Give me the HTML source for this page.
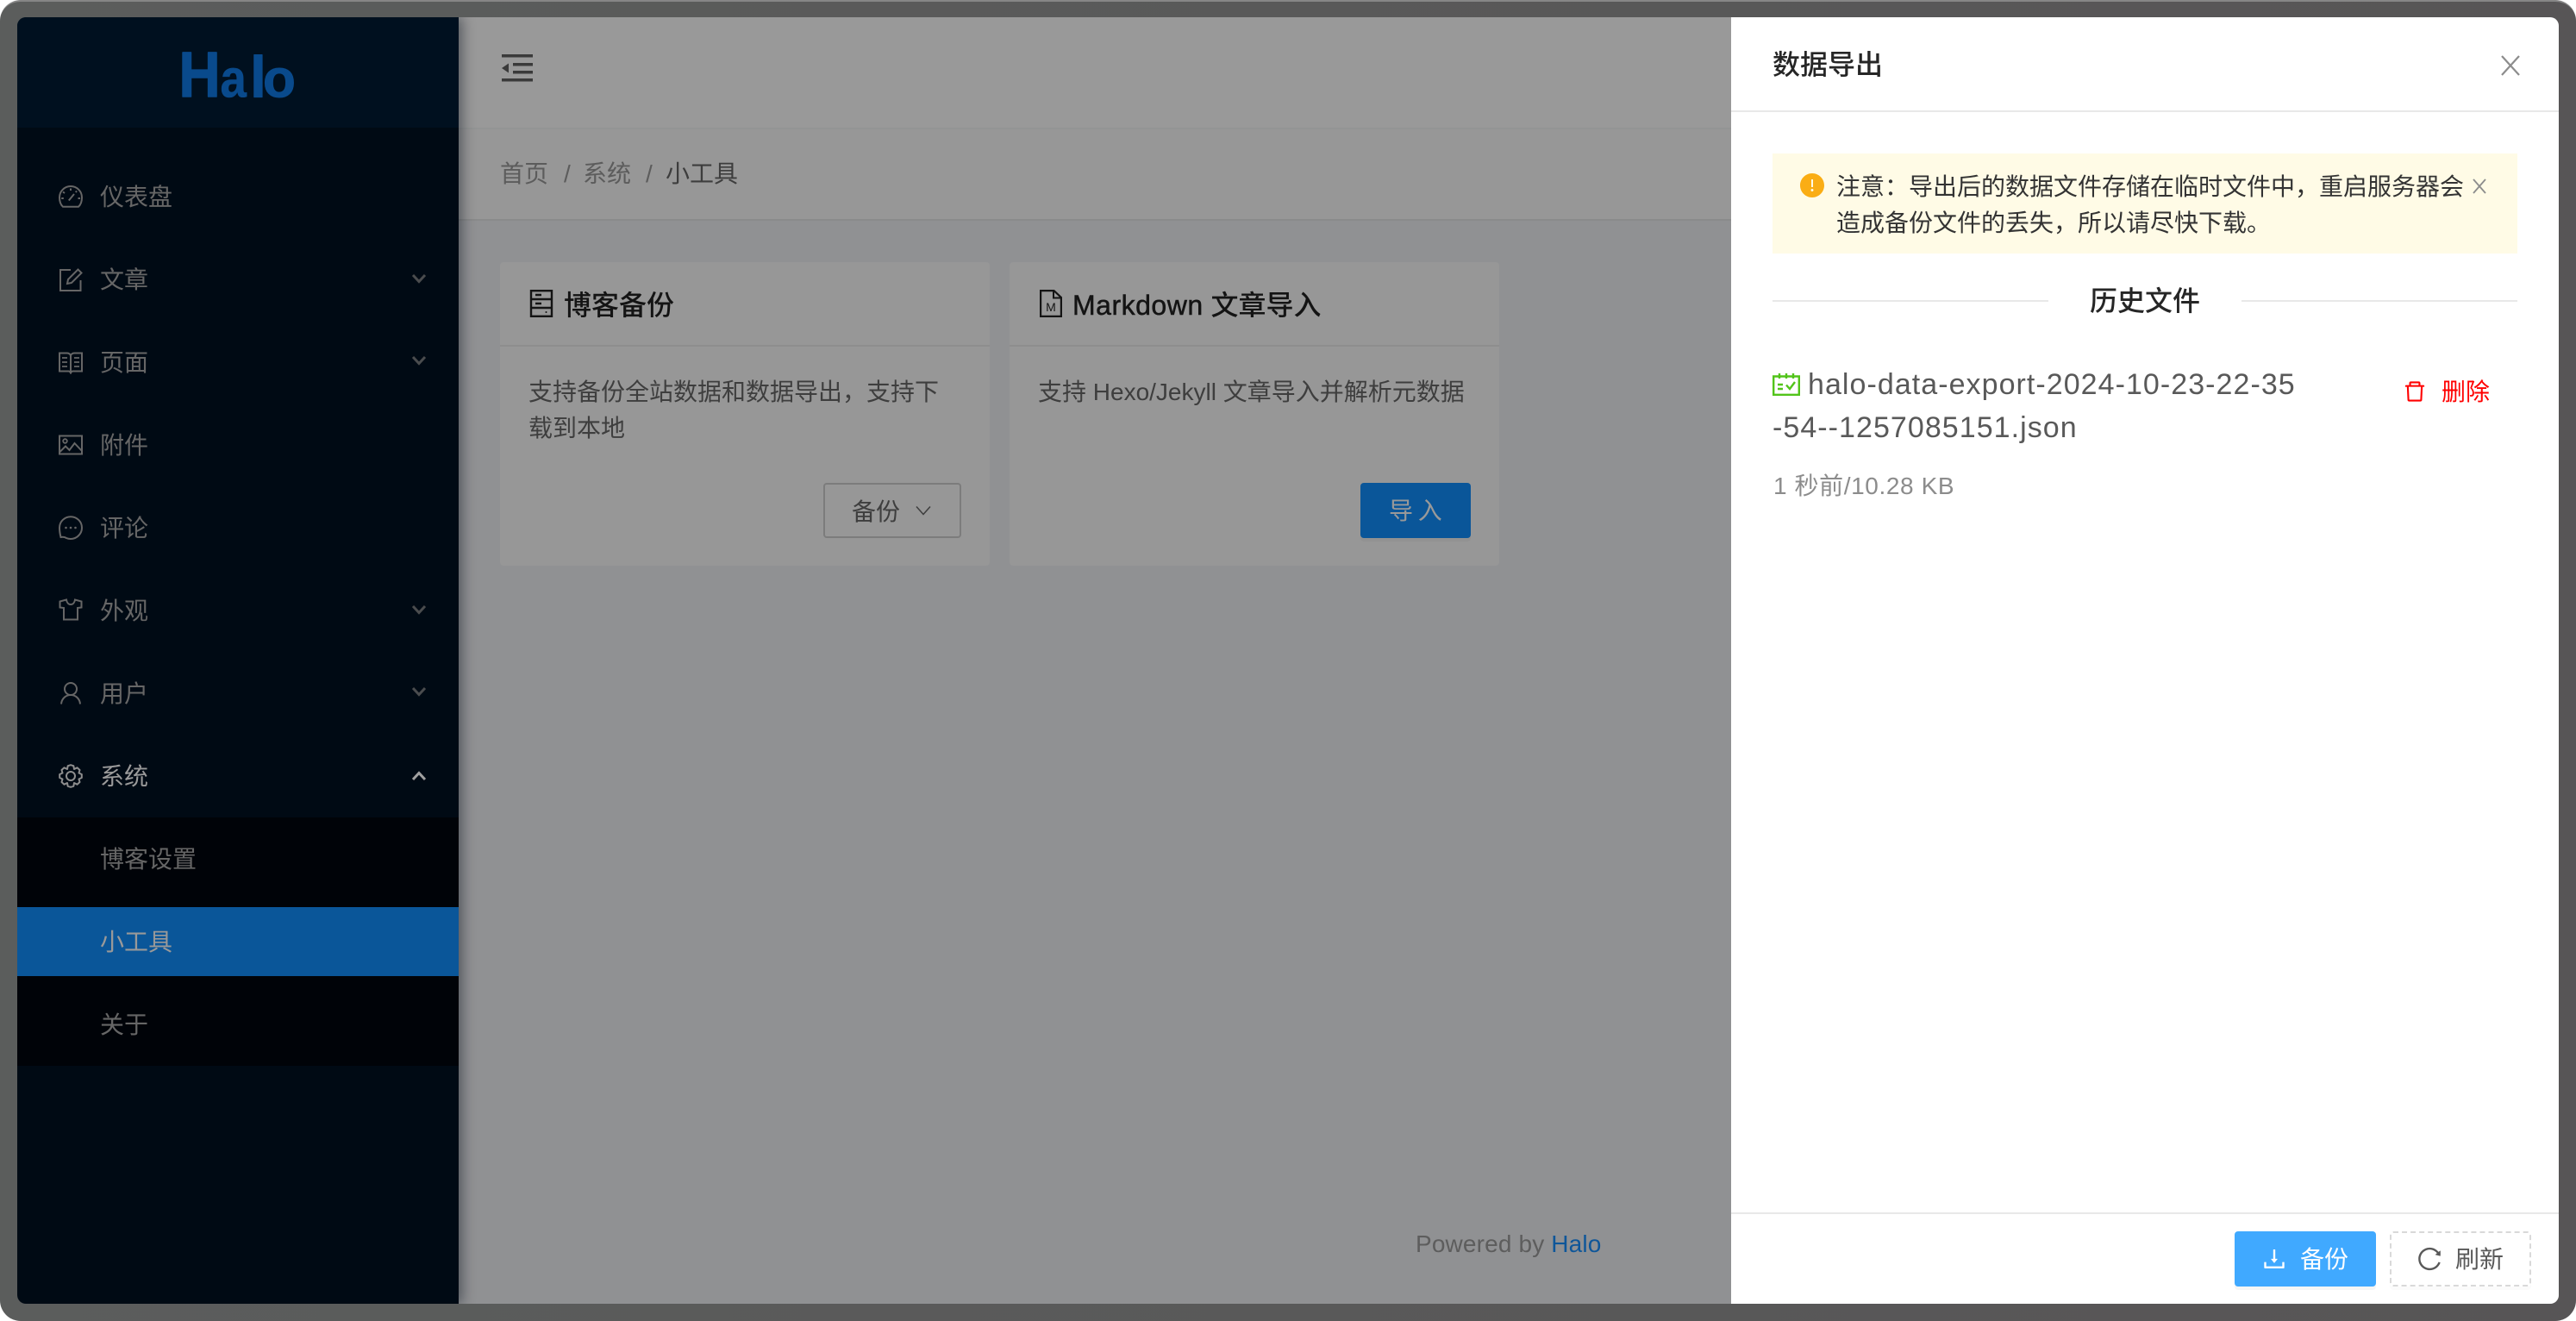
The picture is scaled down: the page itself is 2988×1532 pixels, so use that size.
<!DOCTYPE html>
<html lang="zh-CN"><head><meta charset="utf-8"><title>Halo</title>
<style>
*{box-sizing:border-box;margin:0;padding:0}
html,body{width:2988px;height:1532px;overflow:hidden;background:#fff}
body{font-family:"Liberation Sans","Noto Sans CJK SC",sans-serif;font-size:28px;position:relative}
.frame{position:absolute;left:0;top:0;width:2988px;height:1532px;border-radius:24px;background:linear-gradient(90deg,#5b5d5c,#575556);border-top:2px solid #868686;overflow:hidden}
.win{position:absolute;left:20px;top:20px;width:2948px;height:1492px;border-radius:10px;overflow:hidden;background:#909193}
.a{position:absolute}
.t{position:absolute;white-space:nowrap;line-height:42px}
svg{position:absolute;overflow:visible;fill:none;stroke:currentColor}
svg.f{fill:currentColor;stroke:none}
.sb{left:0;top:0;width:512px;height:1492px;background:#000a14;box-shadow:4px 0 14px rgba(0,12,24,.45)}
.m{color:#666}
</style></head><body>
<div class="frame"></div>
<div class="win">
 <div class="a" style="left:512px;top:0;width:1476px;height:130px;background:#999;border-bottom:2px solid #939494"></div>
 <div class="a" style="left:512px;top:130px;width:1476px;height:106px;background:#979797;border-bottom:2px solid #8a8b8b"></div>
 <svg class="f" style="left:562px;top:43px;color:#3a3a3a" width="36" height="32" viewBox="0 0 36 32"><rect x="0" y="0" width="36" height="3.500"/><rect x="13" y="10" width="23" height="3.500"/><rect x="13" y="19" width="23" height="3.500"/><rect x="0" y="28" width="36" height="3.500"/><path d="M0 16L8 10.500V21.500Z"/></svg>
 <div class="t" style="left:560px;top:161px;color:#5c5c5c">首页</div>
 <div class="t" style="left:634px;top:161px;color:#5c5c5c">/</div>
 <div class="t" style="left:656px;top:161px;color:#5c5c5c">系统</div>
 <div class="t" style="left:729px;top:161px;color:#5c5c5c">/</div>
 <div class="t" style="left:752px;top:161px;color:#3d3d3d">小工具</div>

 <!-- card 1 -->
 <div class="a" style="left:560px;top:284px;width:568px;height:352px;background:#979797;border-radius:4px"></div>
 <div class="a" style="left:560px;top:380px;width:568px;height:2px;background:#8e8e8e"></div>
 <svg style="left:595px;top:316px;color:#141414" width="26" height="32" viewBox="0 0 26 32" stroke-width="2.400"><rect x="1" y="1.200" width="24" height="29.600"/><path d="M1 11H25M1 21H25M6 6H13M6 16H13"/><circle cx="18.500" cy="26" r="1" fill="#141414" stroke="none"/></svg>
 <div class="t" style="left:634px;top:313px;font-size:32px;font-weight:500;color:#141414">博客备份</div>
 <div class="t" style="left:593px;top:414px;color:#3e3e3e">支持备份全站数据和数据导出，支持下</div>
 <div class="t" style="left:593px;top:456px;color:#3e3e3e">载到本地</div>
 <div class="a" style="left:935px;top:540px;width:160px;height:64px;border:2px solid #7c7c7c;border-radius:4px"></div>
 <div class="t" style="left:968px;top:553px;color:#3e3e3e">备份</div>
 <svg style="left:1042px;top:566px;color:#3e3e3e" width="18" height="12" viewBox="0 0 18 12" stroke-width="1.500"><path d="M1 1.500L9 10.500L17 1.500"/></svg>

 <!-- card 2 -->
 <div class="a" style="left:1151px;top:284px;width:568px;height:352px;background:#979797;border-radius:4px"></div>
 <div class="a" style="left:1151px;top:380px;width:568px;height:2px;background:#8e8e8e"></div>
 <svg style="left:1186px;top:316px;color:#141414" width="26" height="32" viewBox="0 0 26 32" stroke-width="2.200"><path d="M1.100 1.100H16.500L24.900 9V30.900H1.100Z"/><path d="M16 1.500V9.500H24.500" stroke-width="2"/><text x="13" y="25" text-anchor="middle" font-size="14" fill="#141414" stroke="none" font-family="Liberation Sans">M</text></svg>
 <div class="t" style="left:1224px;top:313px;font-size:32px;color:#141414"><span style="letter-spacing:.5px;-webkit-text-stroke:.5px #141414">Markdown</span> <span style="font-weight:500">文章导入</span></div>
 <div class="t" style="left:1184px;top:414px;color:#3e3e3e">支持 Hexo/Jekyll 文章导入并解析元数据</div>
 <div class="a" style="left:1558px;top:540px;width:128px;height:64px;background:#0a5699;border-radius:4px;box-shadow:0 4px 0 rgba(0,0,0,.03)"></div>
 <div class="t" style="left:1591px;top:552px;color:#999;word-spacing:-2px">导 入</div>

 <div class="t" style="left:1622px;top:1402px;color:#5d5d5d;letter-spacing:.15px">Powered by <span style="color:#0e5699">Halo</span></div>

 <!-- sidebar -->
 <div class="a sb">
  <div class="a" style="left:0;top:0;width:512px;height:128px;background:#00101f"></div>
  <svg style="left:0;top:0;stroke:none" width="512" height="128" viewBox="0 0 512 128">
   <defs><linearGradient id="lg2" gradientUnits="userSpaceOnUse" x1="0" y1="40" x2="0" y2="93"><stop offset="0" stop-color="#094a8c"/><stop offset="1" stop-color="#063470"/></linearGradient></defs>
   <g font-family="Liberation Sans" font-weight="700" fill="url(#lg2)" stroke="url(#lg2)" stroke-linejoin="round">
    <text transform="translate(187.500,92) scale(.9,1)" font-size="74" stroke-width="1.500">H</text>
    <text transform="translate(235.500,92.500) scale(.88,1)" font-size="62" stroke-width=".6">a</text>
    <text transform="translate(270,92.500)" font-size="68">l</text>
    <text transform="translate(285,92.500)" font-size="62">o</text>
   </g>
  </svg>

  <svg class="m" style="left:48px;top:194px" width="28" height="28" viewBox="0 0 28 28" stroke-width="2"><path d="M5 25.800H23C25.500 23.500 27 20 27 15A13 13 0 0 0 1 15C1 20 2.500 23.500 5 25.800Z"/><path d="M11.800 18.500L18 11M14 4.500V7M5 8.500L7 10M3.200 16H5.800M22.500 16H25M21 7.500L19.800 9" stroke-width="2"/></svg>
  <div class="t m" style="left:96px;top:188px">仪表盘</div>
  <svg class="m" style="left:48px;top:290px" width="28" height="28" viewBox="0 0 28 28" stroke-width="2"><path d="M14 3H2V27H25.500V15"/><path d="M10 19L11 14L22.500 2.500L26.500 6.500L15 18Z"/></svg>
  <div class="t m" style="left:96px;top:284px">文章</div>
  <svg class="m" style="left:48px;top:386px" width="28" height="28" viewBox="0 0 28 28" stroke-width="2"><path d="M1 3.500H10C12 3.500 14 5 14 7V26L12 24.500H1ZM27 3.500H18C16 3.500 14 5 14 7V26L16 24.500H27Z"/><path d="M4 9H10M4 14H10M4 19H10M18 9H24M18 14H24M18 19H24" stroke-width="1.800"/></svg>
  <div class="t m" style="left:96px;top:380px">页面</div>
  <svg class="m" style="left:48px;top:482px" width="28" height="28" viewBox="0 0 28 28" stroke-width="2"><rect x="1" y="3.500" width="26" height="21"/><circle cx="7.500" cy="9.500" r="2.300" stroke-width="1.800"/><path d="M1.500 22L8 15.500L12.500 20L18.500 12L26.500 20.500"/></svg>
  <div class="t m" style="left:96px;top:476px">附件</div>
  <svg class="m" style="left:48px;top:578px" width="28" height="28" viewBox="0 0 28 28" stroke-width="2"><path d="M14 1.200C6.800 1.200 1 7 1 14C1 18 1.500 21 2.500 25C5 24.500 7 24.700 9 26C10.500 26.700 12.300 27 14 27C21.200 27 27 21 27 14S21.200 1.200 14 1.200Z"/><g fill="#666" stroke="none"><circle cx="8.500" cy="14" r="1.300"/><circle cx="14" cy="14" r="1.300"/><circle cx="19.500" cy="14" r="1.300"/></g></svg>
  <div class="t m" style="left:96px;top:572px">评论</div>
  <svg class="m" style="left:48px;top:673px" width="28" height="28" viewBox="0 0 28 28" stroke-width="2"><path d="M9 2.500L1.500 4.500V11.500L6 12V25.500H22V12L26.500 11.500V4.500L19 2.500C18.500 6 16.500 8 14 8S9.500 6 9 2.500Z"/></svg>
  <div class="t m" style="left:96px;top:668px">外观</div>
  <svg class="m" style="left:48px;top:770px" width="28" height="28" viewBox="0 0 28 28" stroke-width="2"><circle cx="14" cy="9" r="7"/><path d="M3 26.500C3.500 20.500 8 16 14 16S24.500 20.500 25 26.500"/></svg>
  <div class="t m" style="left:96px;top:764px">用户</div>
  <svg style="left:48px;top:866px;color:#8e8e8e" width="28" height="28" viewBox="0 0 28 28" stroke-width="2"><path d="M14 1.200L17.300 2.200L18 6L21.500 4.300L24.500 7L23.500 10.500L26.800 12V16L23.500 17.500L24.500 21L21.500 23.700L18 22L17.300 25.800L14 26.800L10.700 25.800L10 22L6.500 23.700L3.500 21L4.500 17.500L1.200 16V12L4.500 10.500L3.500 7L6.500 4.300L10 6L10.700 2.200Z" stroke-linejoin="round"/><circle cx="14" cy="14" r="5"/></svg>
  <div class="t" style="left:96px;top:860px;color:#9a9a9a">系统</div>

  <svg style="left:458px;top:297px;color:#4a4c4e" width="16" height="12" viewBox="0 0 16 12" stroke-width="3"><path d="M1 2L8 9.500L15 2"/></svg>
  <svg style="left:458px;top:392px;color:#4a4c4e" width="16" height="12" viewBox="0 0 16 12" stroke-width="3"><path d="M1 2L8 9.500L15 2"/></svg>
  <svg style="left:458px;top:681px;color:#4a4c4e" width="16" height="12" viewBox="0 0 16 12" stroke-width="3"><path d="M1 2L8 9.500L15 2"/></svg>
  <svg style="left:458px;top:776px;color:#4a4c4e" width="16" height="12" viewBox="0 0 16 12" stroke-width="3"><path d="M1 2L8 9.500L15 2"/></svg>
  <svg style="left:458px;top:874px;color:#a0a0a0" width="16" height="12" viewBox="0 0 16 12" stroke-width="3"><path d="M1 10L8 2.500L15 10"/></svg>

  <div class="a" style="left:0;top:928px;width:512px;height:288px;background:#000308"></div>
  <div class="t m" style="left:96px;top:956px;color:#666">博客设置</div>
  <div class="a" style="left:0;top:1032px;width:512px;height:80px;background:#0a5699"></div>
  <div class="t" style="left:96px;top:1052px;color:#999">小工具</div>
  <div class="t m" style="left:96px;top:1148px">关于</div>
 </div>

 <!-- drawer -->
 <div class="a" style="left:1988px;top:0;width:960px;height:1492px;background:#fff">
  <div class="t" style="left:48px;top:34px;font-size:32px;font-weight:500;color:#262626">数据导出</div>
  <svg style="left:893px;top:44px;color:#8c8c8c" width="22" height="24" viewBox="0 0 22 24" stroke-width="2.200"><path d="M1 1L21 23M21 1L1 23"/></svg>
  <div class="a" style="left:0;top:108px;width:960px;height:2px;background:#e8e8e8"></div>

  <div class="a" style="left:48px;top:158px;width:864px;height:116px;background:#fffbe6"></div>
  <svg class="f" style="left:80px;top:181px;color:#faad14" width="28" height="28" viewBox="64 64 896 896"><path d="M512 64C264.600 64 64 264.600 64 512s200.600 448 448 448 448-200.600 448-448S759.400 64 512 64zm-32 232c0-4.400 3.600-8 8-8h48c4.400 0 8 3.600 8 8v272c0 4.400-3.600 8-8 8h-48c-4.400 0-8-3.600-8-8V296zm32 440a48.010 48.010 0 0 1 0-96 48.010 48.010 0 0 1 0 96z"/></svg>
  <div class="t" style="left:122px;top:176px;color:#333">注意：导出后的数据文件存储在临时文件中，重启服务器会</div>
  <div class="t" style="left:122px;top:218px;color:#333">造成备份文件的丢失，所以请尽快下载。</div>
  <svg style="left:860px;top:187px;color:#8c8c8c" width="16" height="18" viewBox="0 0 16 18" stroke-width="1.800"><path d="M1 1L15 17M15 1L1 17"/></svg>

  <div class="a" style="left:48px;top:328px;width:320px;height:2px;background:#e8e8e8"></div>
  <div class="a" style="left:592px;top:328px;width:320px;height:2px;background:#e8e8e8"></div>
  <div class="t" style="left:416px;top:308px;font-size:32px;font-weight:500;color:#262626">历史文件</div>

  <svg style="left:48px;top:413px;color:#52c41a" width="32" height="26" viewBox="0 0 32 26" stroke-width="2.400"><path d="M1.200 3.500H30.800V24.800H1.200Z"/><path d="M8 0V6M16 0V6M24 0V6M6 13H12M6 18H12"/><path d="M16 13.500L20 18L26 10"/></svg>
  <div class="t" style="left:89px;top:402px;font-size:34px;line-height:48px;letter-spacing:1.050px;color:#595959">halo-data-export-2024-10-23-22-35</div>
  <div class="t" style="left:48px;top:452px;font-size:34px;line-height:48px;letter-spacing:1.050px;color:#595959">-54--1257085151.json</div>
  <div class="t" style="left:49px;top:523px;color:#8c8c8c;letter-spacing:.6px">1 秒前/10.28 KB</div>

  <svg class="f" style="left:780px;top:421px;color:#f00" width="26" height="26" viewBox="64 64 896 896"><path d="M360 184h-8c4.400 0 8-3.600 8-8v8h304v-8c0 4.400 3.600 8 8 8h-8v72h72v-80c0-35.300-28.700-64-64-64H352c-35.300 0-64 28.700-64 64v80h72v-72zm504 72H160c-17.700 0-32 14.300-32 32v32c0 4.400 3.600 8 8 8h60.400l24.700 523c1.600 34.100 29.800 61 63.900 61h454c34.200 0 62.300-26.800 63.900-61l24.700-523H888c4.400 0 8-3.600 8-8v-32c0-17.700-14.300-32-32-32zM731.300 840H292.700l-24.200-512h487l-24.200 512z"/></svg>
  <div class="t" style="left:824px;top:414px;color:#f00">删除</div>

  <div class="a" style="left:0;top:1386px;width:960px;height:2px;background:#e8e8e8"></div>
  <div class="a" style="left:584px;top:1408px;width:164px;height:64px;background:#40a9ff;border-radius:4px;box-shadow:0 4px 0 rgba(0,0,0,.035)"></div>
  <svg class="f" style="left:616px;top:1426px;color:#fff" width="28" height="28" viewBox="64 64 896 896"><path d="M505.700 661a8 8 0 0 0 12.600 0l112-141.700c4.100-5.200.4-12.900-6.300-12.900h-74.100V168c0-4.400-3.600-8-8-8h-60c-4.400 0-8 3.600-8 8v338.300H400c-6.700 0-10.400 7.700-6.300 12.900l112 141.800zM878 626h-60c-4.400 0-8 3.600-8 8v154H214V634c0-4.400-3.600-8-8-8h-60c-4.400 0-8 3.600-8 8v198c0 17.700 14.300 32 32 32h684c17.700 0 32-14.300 32-32V634c0-4.400-3.600-8-8-8z"/></svg>
  <div class="t" style="left:660px;top:1420px;color:#fff">备份</div>
  <div class="a" style="left:764px;top:1408px;width:164px;height:64px;border:2px dashed #d9d9d9;border-radius:4px;box-shadow:0 4px 0 rgba(0,0,0,.015)"></div>
  <svg class="f" style="left:796px;top:1426px;color:#595959" width="28" height="28" viewBox="64 64 896 896"><path d="M909.100 209.300l-56.400 44.100C775.800 155.100 656.200 92 521.900 92 290 92 102.300 279.500 102 511.500 101.700 743.700 289.800 932 521.900 932c181.300 0 335.800-115 394.600-276.100 1.500-4.200-.7-8.900-4.900-10.300l-56.700-19.500a8 8 0 0 0-10.100 4.800c-1.800 5-3.800 10-5.900 14.900-17.300 41-42.100 77.800-73.700 109.400A344.770 344.770 0 0 1 655.900 829c-42.300 17.900-87.400 27-133.800 27-46.500 0-91.500-9.100-133.800-27A341.500 341.500 0 0 1 279 755.200a342.160 342.160 0 0 1-73.700-109.400c-17.900-42.400-27-87.400-27-133.900s9.100-91.500 27-133.900c17.300-41 42.100-77.800 73.700-109.400 31.600-31.600 68.400-56.400 109.300-73.800 42.300-17.900 87.400-27 133.800-27 46.500 0 91.500 9.100 133.800 27a341.500 341.500 0 0 1 109.300 73.800c9.900 9.900 19.200 20.400 27.800 31.400l-60.200 47a8 8 0 0 0 3 14.100l175.600 43c5 1.200 9.900-2.600 9.900-7.700l.8-180.900c-.1-6.600-7.800-10.300-13-6.200z"/></svg>
  <div class="t" style="left:840px;top:1420px;color:#595959">刷新</div>
 </div>
</div>
</body></html>
